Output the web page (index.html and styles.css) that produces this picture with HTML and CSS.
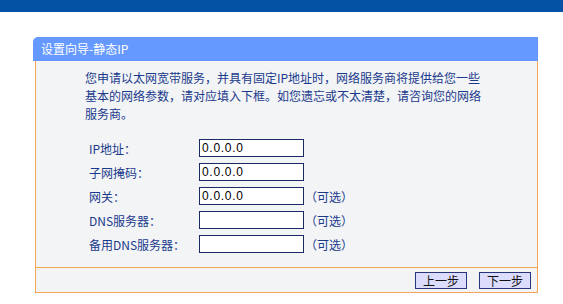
FILE: index.html
```html
<!doctype html>
<html lang="zh-CN">
<head>
	<meta charset="UTF-8">
	<title>设置向导-静态IP</title>
	<link rel="stylesheet" href="styles.css">
</head>
<body>
	<div class="topbar"></div>
	<div class="panel">
		<div class="panel-head">设置向导-静态IP</div>
		<div class="panel-body">
			<p class="intro">您申请以太网宽带服务，并具有固定IP地址时，网络服务商将提供给您一些基本的网络参数，请对应填入下框。如您遗忘或不太清楚，请咨询您的网络服务商。</p>
			<div class="form">
				<div class="row">
					<label class="label">IP地址：</label>
					<input class="field" type="text" value="0.0.0.0">
				</div>
				<div class="row">
					<label class="label">子网掩码：</label>
					<input class="field" type="text" value="0.0.0.0">
				</div>
				<div class="row">
					<label class="label">网关：</label>
					<input class="field" type="text" value="0.0.0.0">
					<span class="opt">（可选）</span>
				</div>
				<div class="row">
					<label class="label">DNS服务器：</label>
					<input class="field" type="text" value="">
					<span class="opt">（可选）</span>
				</div>
				<div class="row">
					<label class="label">备用DNS服务器：</label>
					<input class="field" type="text" value="">
					<span class="opt">（可选）</span>
				</div>
			</div>
		</div>
		<div class="panel-foot">
			<button class="btn" type="button">上一步</button>
			<button class="btn" type="button">下一步</button>
		</div>
	</div>
</body>
</html>
```

FILE: styles.css
```css
*{
	margin:0;
	padding:0;
	box-sizing:border-box;
}
body{
	background:#fff;
	font-family:"Noto Sans CJK SC",sans-serif;
	font-size:12px;
	color:#1a3a8c;
}
.topbar{
	height:12px;
	background:#0452a4;
}
.panel{
	width:505px;
	margin:25px 0 0 33px;
}
.panel-head{
	height:24px;
	line-height:24px;
	padding-left:8px;
	background:#6699ff;
	color:#fff;
	border-top-left-radius:5px;
}
.panel-body,
.panel-foot{
	margin-left:2px;
	background:#f3f4f6;
	border-left:1px solid #f3a555;
	border-right:1px solid #f3a555;
}
.panel-body{
	padding:8px 0 11px 49px;
}
.intro{
	width:400px;
	line-height:18px;
}
.form{
	margin-top:13px;
	padding-left:4px;
}
.row{
	display:flex;
	align-items:center;
	height:24px;
}
.label{
	width:110px;
}
.field{
	width:105px;
	height:18px;
	border:1px solid #1c2a62;
	background:#fff;
	padding:0 2px;
	font-family:"Liberation Sans",sans-serif;
	font-size:12px;
	letter-spacing:0.7px;
	color:#000;
	outline:none;
}
.opt{
	margin-left:1px;
}
.panel-foot{
	display:flex;
	justify-content:flex-end;
	align-items:center;
	gap:12px;
	height:26px;
	padding-right:6px;
	border-top:1px solid #f3a555;
	border-bottom:1px solid #f3a555;
}
.btn{
	width:52px;
	height:17px;
	background:#dcdcfc;
	border:1px solid #27367a;
	font-family:"Noto Sans CJK SC",sans-serif;
	font-size:12px;
	line-height:15px;
	color:#111;
}
```
